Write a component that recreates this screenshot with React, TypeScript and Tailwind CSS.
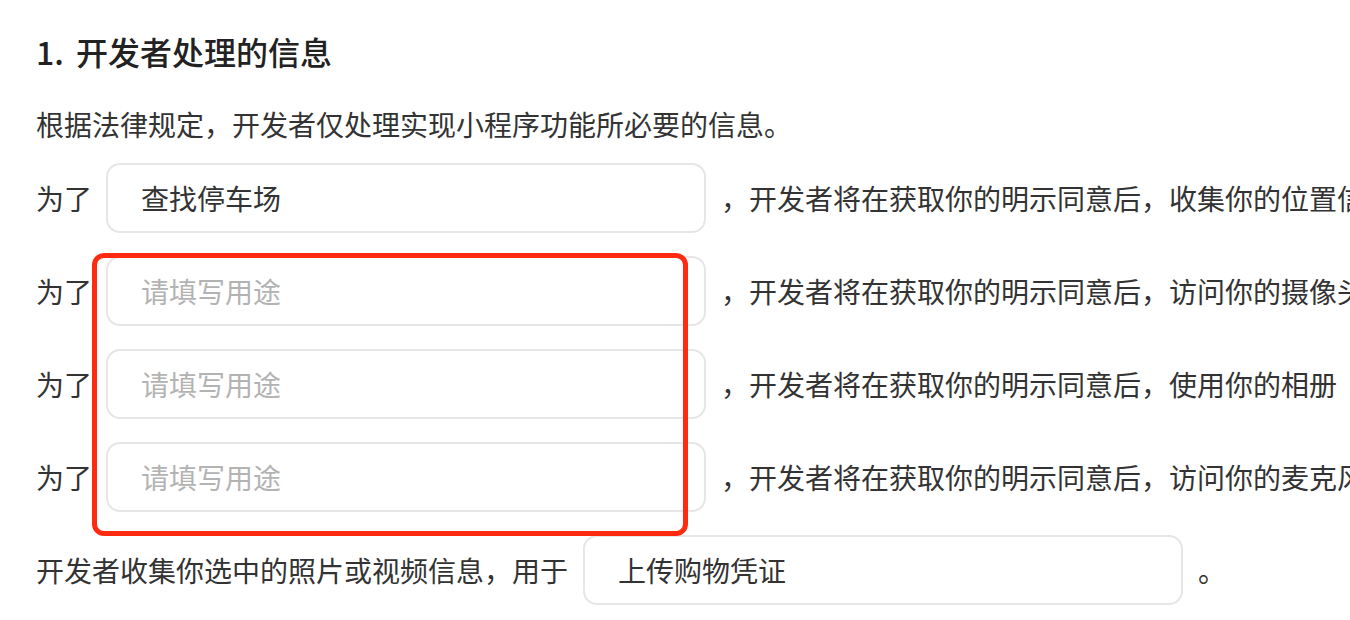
import React from "react";

const font = { fontFamily: '"Noto Sans CJK SC", "Noto Sans", sans-serif' };

function Field({ value, placeholder }: { value?: string; placeholder?: string }) {
  return (
    <div className="shrink-0 w-[600px] h-[70px] rounded-[14px] border-2 border-[#e6e6e6] bg-white flex items-center pl-[33px]">
      {value ? (
        <span className="text-[28px] leading-[40px] text-[#333333]">{value}</span>
      ) : (
        <span className="text-[28px] leading-[40px] text-[#b3b3b3]">{placeholder}</span>
      )}
    </div>
  );
}

function Row({ value, tail }: { value?: string; tail: string }) {
  return (
    <div className="flex items-center h-[70px] whitespace-nowrap">
      <span className="text-[28px] leading-[40px] text-[#333333] w-[70px] shrink-0">为了</span>
      <Field value={value} placeholder="请填写用途" />
      <span className="ml-[15px] text-[28px] leading-[40px] text-[#333333]">{tail}</span>
    </div>
  );
}

export default function App() {
  return (
    <div className="relative w-[1350px] h-[620px] overflow-hidden bg-white" style={font}>
      <div className="pl-[36px] pt-[31px]">
        <div className="flex items-center h-[40px] text-[32px] font-medium text-[#222222] whitespace-nowrap">
          <span className="w-[40px]">1.</span>
          <span>开发者处理的信息</span>
        </div>
        <div className="mt-[33px] h-[40px] text-[28px] leading-[40px] text-[#333333] whitespace-nowrap">
          根据法律规定，开发者仅处理实现小程序功能所必要的信息。
        </div>
        <div className="mt-[19px] flex flex-col gap-[23px]">
          <Row value="查找停车场" tail="，开发者将在获取你的明示同意后，收集你的位置信息" />
          <Row tail="，开发者将在获取你的明示同意后，访问你的摄像头" />
          <Row tail="，开发者将在获取你的明示同意后，使用你的相册" />
          <Row tail="，开发者将在获取你的明示同意后，访问你的麦克风" />
          <div className="flex items-center h-[70px] whitespace-nowrap">
            <span className="text-[28px] leading-[40px] text-[#333333] w-[547px] shrink-0">
              开发者收集你选中的照片或视频信息，用于
            </span>
            <Field value="上传购物凭证" />
            <span className="ml-[15px] text-[28px] leading-[40px] text-[#333333]">。</span>
          </div>
        </div>
      </div>
      <div className="absolute left-[92px] top-[253px] w-[596px] h-[283px] border-[5px] border-[#ff2a10] rounded-[12px] pointer-events-none" />
    </div>
  );
}
